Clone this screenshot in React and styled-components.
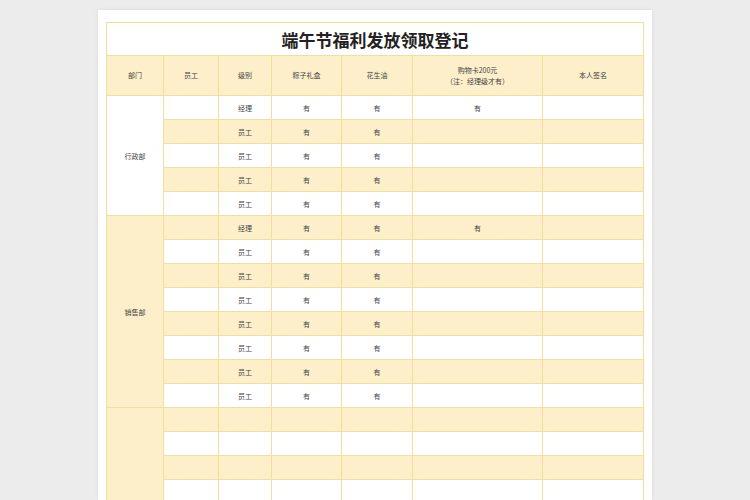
import styled, { createGlobalStyle } from "styled-components";

const Global = createGlobalStyle`
  html, body { margin: 0; background: #ececec; font-family: "Noto Sans CJK SC", "Liberation Sans", sans-serif; }
`;

const Page = styled.div`
  width: 750px;
  height: 500px;
  overflow: hidden;
  display: flex;
  justify-content: center;
  padding-top: 10px;
  box-sizing: border-box;
`;

const Paper = styled.div`
  width: 554px;
  background: #fff;
  padding: 12px 9px 0 8px;
  box-sizing: border-box;
  box-shadow: 0 0 4px rgba(0,0,0,0.08);
  margin-left: 0;
  transform: translateX(0);
`;

const Table = styled.table`
  border-collapse: collapse;
  table-layout: fixed;
  width: 537px;
  font-size: 7px;
  color: #444;
  td, th { border: 1px solid #f1df9c; text-align: center; padding: 0; }
`;

const Title = styled.th`
  height: 32px;
  font-size: 17px;
  font-weight: 700;
  color: #222;
  background: #fff;
`;

const Head = styled.th`
  height: 39px;
  background: #fcefca;
  font-weight: 400;
  line-height: 11px;
`;

const Cell = styled.td`
  height: 23px;
  background: ${p => (p.$cream ? "#fcefca" : "#fff")};
`;

const cols = [57, 55, 53, 70, 71, 130, 101];

const rows = [
  ["行政部", 5, ["经理", "员工", "员工", "员工", "员工"]],
  ["销售部", 8, ["经理", "员工", "员工", "员工", "员工", "员工", "员工", "员工"]],
  ["", 4, ["", "", "", ""]],
];

export default function App() {
  let idx = 0;
  return (
    <Page>
      <Global />
      <Paper>
        <Table>
          <colgroup>{cols.map((w, i) => <col key={i} style={{ width: w }} />)}</colgroup>
          <thead>
            <tr><Title colSpan={7}>端午节福利发放领取登记</Title></tr>
            <tr>
              <Head>部门</Head><Head>员工</Head><Head>级别</Head><Head>粽子礼盒</Head><Head>花生油</Head>
              <Head>购物卡200元<br />（注：经理级才有）</Head><Head>本人签名</Head>
            </tr>
          </thead>
          <tbody>
            {rows.map(([dept, n, levels], g) =>
              levels.map((lv, i) => {
                const cream = idx++ % 2 === 1;
                return (
                  <tr key={g + "-" + i}>
                    {i === 0 && <Cell rowSpan={n} $cream={g > 0}>{dept}</Cell>}
                    <Cell $cream={cream} />
                    <Cell $cream={cream}>{lv}</Cell>
                    <Cell $cream={cream}>{lv ? "有" : ""}</Cell>
                    <Cell $cream={cream}>{lv ? "有" : ""}</Cell>
                    <Cell $cream={cream}>{lv === "经理" ? "有" : ""}</Cell>
                    <Cell $cream={cream} />
                  </tr>
                );
              })
            )}
          </tbody>
        </Table>
      </Paper>
    </Page>
  );
}
